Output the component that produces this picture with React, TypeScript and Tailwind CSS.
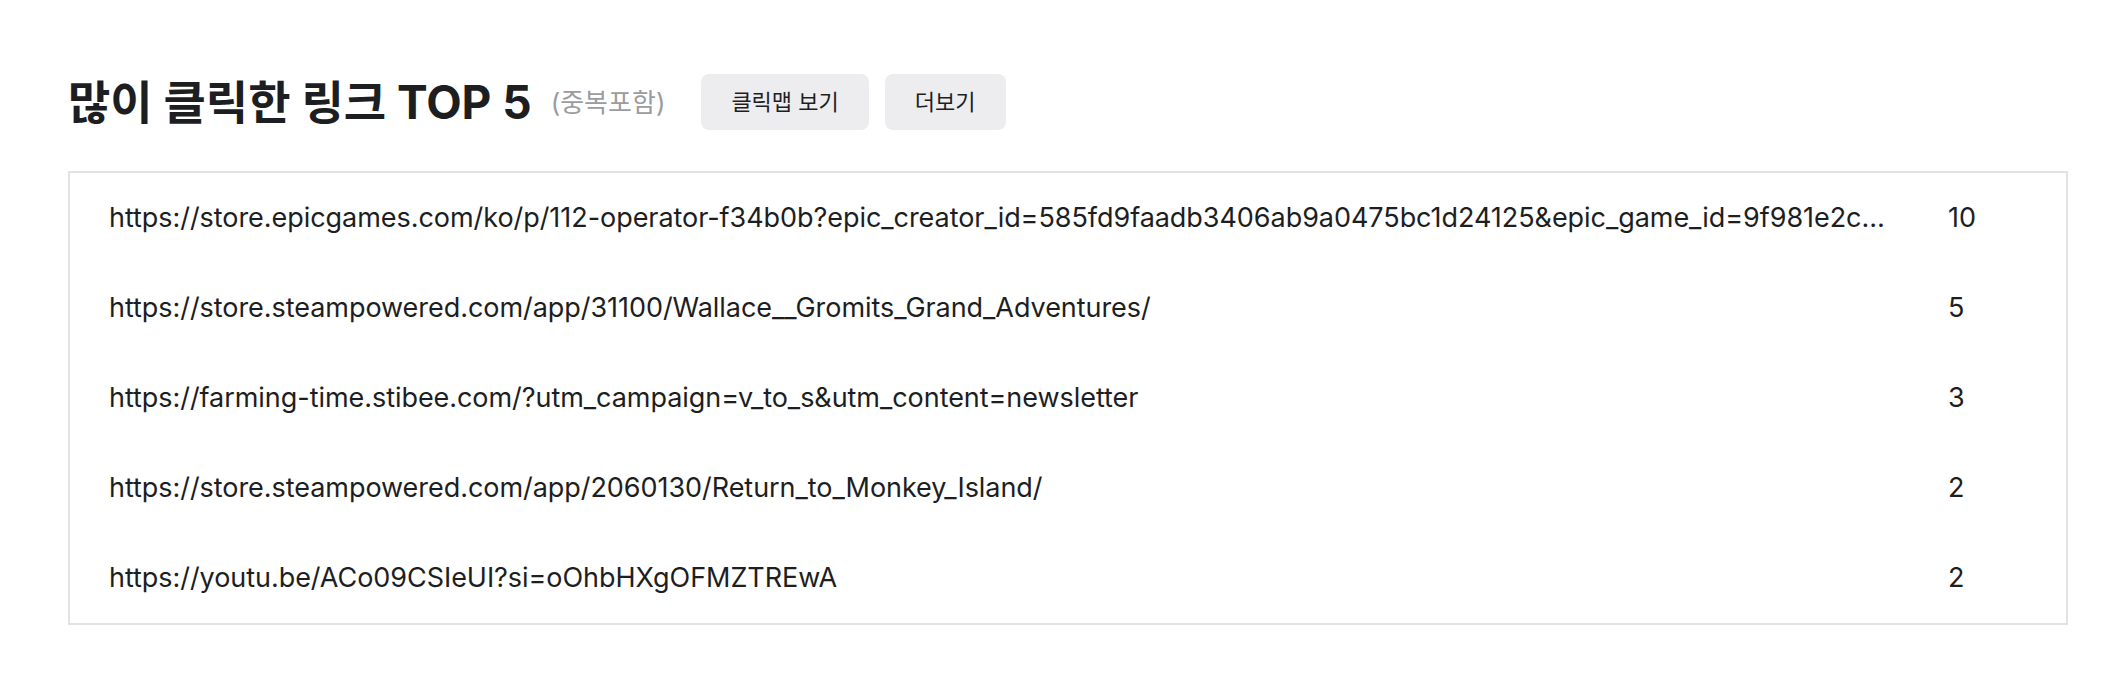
import React from 'react';

const links = [
  {
    url: 'https://store.epicgames.com/ko/p/112-operator-f34b0b?epic_creator_id=585fd9faadb3406ab9a0475bc1d24125&epic_game_id=9f981e2c4ae14b3fa0f0e0b5c0c2d8f1',
    count: 10,
  },
  { url: 'https://store.steampowered.com/app/31100/Wallace__Gromits_Grand_Adventures/', count: 5 },
  { url: 'https://farming-time.stibee.com/?utm_campaign=v_to_s&utm_content=newsletter', count: 3 },
  { url: 'https://store.steampowered.com/app/2060130/Return_to_Monkey_Island/', count: 2 },
  { url: 'https://youtu.be/ACo09CSIeUI?si=oOhbHXgOFMZTREwA', count: 2 },
];

const TopLinks = () => {
  return (
    <section className="pl-[68px] pr-[52px] pt-[74px] pb-[53px]">
      <div className="flex items-center mb-[41px]">
        <h2 className="text-[46px] leading-[56px] font-bold text-[#1d1e22]">
          많이 클릭한 링크 TOP 5
        </h2>
        <span className="ml-[19px] text-[26px] text-[#9b9ca0]">(중복포함)</span>
        <div className="ml-[36px] flex gap-4">
          <button className="h-[56px] px-[30px] rounded-lg bg-[#ededf0] text-[22px] text-[#1d1e22]">
            클릭맵 보기
          </button>
          <button className="h-[56px] px-[30px] rounded-lg bg-[#ededf0] text-[22px] text-[#1d1e22]">
            더보기
          </button>
        </div>
      </div>

      <ul className="border-2 border-[#e3e3e7]">
        {links.map((link, i) => (
          <li key={i} className="flex items-center h-[90px] pl-[39px] text-[27px] tracking-[-0.05px] text-[#1d1e22]">
            <span className="flex-1 min-w-0 truncate pr-[48px]">{link.url}</span>
            <span className="w-[118px] shrink-0">{link.count}</span>
          </li>
        ))}
      </ul>
    </section>
  );
};

export default function App() {
  return (
    <div className="min-h-screen bg-white" style={{ fontFamily: 'Inter, "Noto Sans CJK KR", sans-serif' }}>
      <TopLinks />
    </div>
  );
}
